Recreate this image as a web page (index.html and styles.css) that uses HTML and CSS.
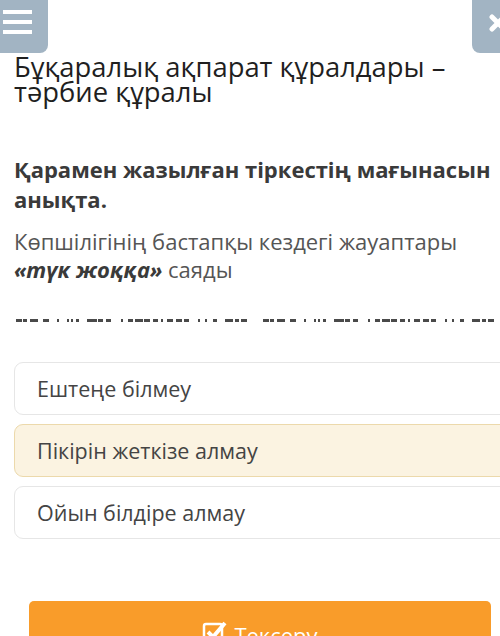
FILE: index.html
```html
<!DOCTYPE html>
<html lang="kk">
<head>
<meta charset="utf-8">
<link rel="stylesheet" href="styles.css">
</head>
<body>
<div class="page">
  <div class="topbar">
    <button class="tb-btn menu" aria-label="menu">
      <span class="bar"></span><span class="bar"></span><span class="bar"></span>
    </button>
    <button class="tb-btn close" aria-label="close">
      <svg width="20" height="20" viewBox="0 0 20 20"><path d="M4 4 L16 16 M16 4 L4 16" stroke="#fff" stroke-width="5" stroke-linecap="round"/></svg>
    </button>
  </div>
  <h1 class="title">Бұқаралық ақпарат құралдары – тәрбие құралы</h1>
  <p class="question">Қарамен жазылған тіркестің мағынасын анықта.</p>
  <p class="sentence">Көпшілігінің бастапқы кездегі жауаптары <b><i>«түк жоққа»</i></b> саяды</p>
  <svg class="dashes" width="484" height="3" viewBox="0 0 484 3">
    <defs>
      <pattern id="dp" width="247" height="3" patternUnits="userSpaceOnUse">
        <g fill="#4a4a4a">
          <rect x="0" y="0" width="6" height="3"/><rect x="7" y="0" width="4" height="3"/>
          <rect x="14" y="0" width="8" height="3"/><rect x="27" y="0" width="6" height="3"/>
          <rect x="41" y="0" width="2" height="3"/><rect x="51" y="0" width="2" height="3"/>
          <rect x="55" y="0" width="2" height="3"/><rect x="60" y="0" width="3" height="3"/>
          <rect x="71" y="0" width="10" height="3"/><rect x="82" y="0" width="5" height="3"/>
          <rect x="90" y="0" width="5" height="3"/><rect x="105" y="0" width="2" height="3"/>
          <rect x="112" y="0" width="5" height="3"/><rect x="119" y="0" width="8" height="3"/>
          <rect x="128" y="0" width="6" height="3"/><rect x="137" y="0" width="5" height="3"/>
          <rect x="145" y="0" width="2" height="3"/><rect x="151" y="0" width="6" height="3"/>
          <rect x="160" y="0" width="6" height="3"/><rect x="168" y="0" width="5" height="3"/>
          <rect x="182" y="0" width="2" height="3"/><rect x="189" y="0" width="2" height="3"/>
          <rect x="197" y="0" width="4" height="3"/><rect x="209" y="0" width="8" height="3"/>
          <rect x="219" y="0" width="4" height="3"/><rect x="225" y="0" width="6" height="3"/>
        </g>
      </pattern>
    </defs>
    <rect width="484" height="3" fill="url(#dp)"/>
  </svg>
  <div class="options">
    <div class="option">Ештеңе білмеу</div>
    <div class="option selected">Пікірін жеткізе алмау</div>
    <div class="option">Ойын білдіре алмау</div>
  </div>
  <div class="check-wrap">
    <button class="check-btn">
      <svg width="26" height="24" viewBox="0 0 26 24"><rect x="2" y="4" width="18" height="18" rx="2" fill="none" stroke="#fff" stroke-width="2.5"/><path d="M6 12 L11 17 L23 3" fill="none" stroke="#fff" stroke-width="4"/></svg>
      <span>Тексеру</span>
    </button>
  </div>
</div>
</body>
</html>
```
FILE: styles.css
```css
* { box-sizing: border-box; }
html, body { margin: 0; padding: 0; background: #fff; }
body { font-family: "Open Sans", "Noto Sans", sans-serif; overflow: hidden; width: 500px; height: 636px; }
.page { width: 500px; }
.topbar { display: flex; justify-content: space-between; height: 52px; }
.tb-btn { border: none; padding: 0; background: #a2b4c3; height: 53px; cursor: pointer; display: flex; }
.menu { width: 48px; border-bottom-right-radius: 8px; flex-direction: column; gap: 6px; padding: 10px 0 0 3px; }
.menu .bar { display: block; width: 29px; height: 4px; background: #fff; }
.close { width: 28px; border-bottom-left-radius: 8px; align-items: center; justify-content: flex-start; padding: 0 0 8px 16px; overflow: hidden; }
.close svg { flex: none; }
.title { margin: 0; padding: 2px 40px 0 14px; font-size: 27.4px; font-weight: 400; line-height: 25px; color: #1f1f1f; }
.question { margin: 0; padding: 50px 0 0 14px; font-size: 22px; font-weight: 700; line-height: 30px; color: #3a3a3a; }
.sentence { margin: 0; padding: 13px 30px 0 14px; font-size: 22px; line-height: 28px; color: #555; }
.sentence b { color: #3a3a3a; }
.dashes { display: block; margin: 36px 0 0 16px; }
.options { display: flex; flex-direction: column; gap: 9px; padding: 40px 0 0 14px; margin-right: -10px; }
.option { height: 53px; border: 1.5px solid #e6e6e6; border-radius: 9px; display: flex; align-items: center; padding-left: 22px; font-size: 21.5px; color: #444; background: #fff; }
.option.selected { background: #fbf3e1; border-color: #ecd9ab; }
.check-wrap { padding: 62px 9px 0 29px; }
.check-btn { width: 100%; height: 60px; border: none; border-radius: 5px; background: #f99c2a; color: #fff; font-family: inherit; font-size: 22px; display: flex; justify-content: center; align-items: flex-start; gap: 6px; padding-top: 19px; }
```
